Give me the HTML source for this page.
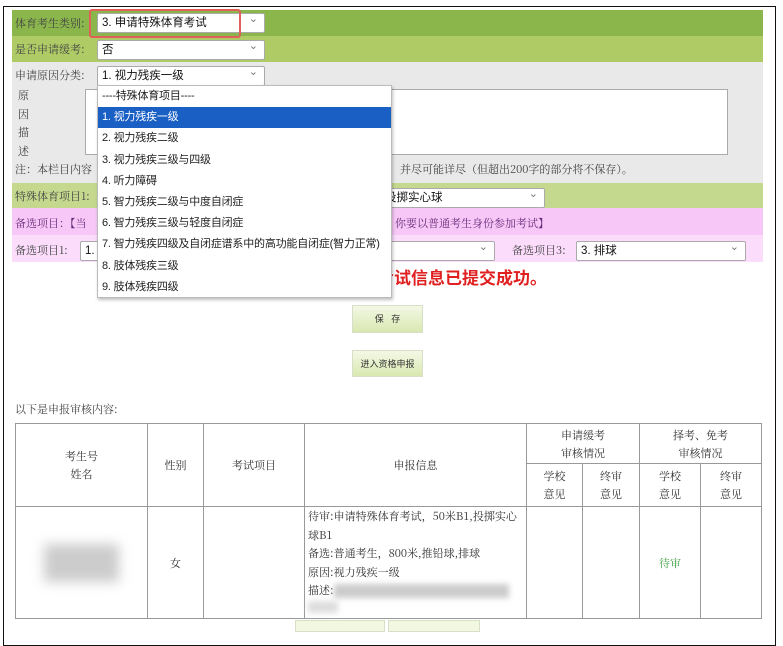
<!DOCTYPE html>
<html><head><meta charset="utf-8"><style>
*{box-sizing:border-box;margin:0;padding:0}
body{width:783px;height:627px;background:#fff;position:relative;overflow:hidden;font-family:"Liberation Sans","Noto Sans CJK SC",sans-serif;font-size:12px;color:#333}
.a{position:absolute}
.frame{left:3px;top:6px;width:773px;height:640px;border:1.5px solid #111}
.sel{position:absolute;background:#fff;border:1px solid #aaa;border-radius:2px;height:20px;font-size:11.5px;line-height:18px;padding-left:4px;color:#111;white-space:nowrap}
.sel:after{content:"⌄";position:absolute;right:6px;top:-4px;font-size:11px;color:#777}
.lbl{position:absolute;font-family:"Noto Serif CJK SC","Liberation Serif",serif;font-size:11px;color:#444;white-space:nowrap}
.dd{left:97px;top:85px;width:295px;height:213px;background:#fff;border:1px solid #bbb;box-shadow:1px 2px 3px rgba(0,0,0,.25);z-index:5}
.dd div{height:21.2px;line-height:21px;padding-left:4px;font-size:11px;color:#222;white-space:nowrap;overflow:hidden;letter-spacing:-0.2px}
.dd .hl{background:#1a5fc4;color:#fff}
.btn{position:absolute;left:352px;width:71px;background:linear-gradient(#f4f8e6,#d9e8b0);border:1px solid #d8dfc8;font-size:9px;text-align:center;color:#333}
table{position:absolute;left:15px;top:423px;border-collapse:collapse;font-family:"Noto Serif CJK SC","Liberation Serif",serif;font-size:11px;color:#333}
td{border:1px solid #999;text-align:center;vertical-align:middle;line-height:18px}
</style></head><body>
<div class="a frame"></div>
<div class="a" style="left:12px;top:10px;width:751px;height:26px;background:#8ab64c"></div>
<div class="a" style="left:12px;top:36px;width:751px;height:26px;background:#aecb66"></div>
<div class="a" style="left:12px;top:62px;width:751px;height:121px;background:#e9e9e9"></div>
<div class="a" style="left:12px;top:183px;width:751px;height:25px;background:#c5d98e"></div>
<div class="a" style="left:12px;top:208px;width:751px;height:27px;background:#f7c8f7"></div>
<div class="a" style="left:12px;top:235px;width:751px;height:27px;background:#fbdcfb"></div>

<div class="lbl" style="left:15px;top:15px">体育考生类别:</div>
<div class="sel" style="left:97px;top:13px;width:168px">3. 申请特殊体育考试</div>
<div class="a" style="left:89px;top:9px;width:152px;height:29px;border:2px solid #e0605a;border-radius:3px"></div>
<div class="lbl" style="left:15px;top:41px">是否申请缓考:</div>
<div class="sel" style="left:97px;top:40px;width:168px">否</div>
<div class="lbl" style="left:15px;top:67px">申请原因分类:</div>
<div class="sel" style="left:97px;top:66px;width:168px">1. 视力残疾一级</div>
<div class="lbl" style="left:18px;top:86px;line-height:18.5px">原<br>因<br>描<br>述</div>
<div class="a" style="left:85px;top:89px;width:643px;height:66px;background:#fff;border:1px solid #aaa"></div>
<div class="lbl" style="left:15px;top:161px">注：本栏目内容</div>
<div class="lbl" style="left:400px;top:161px">并尽可能详尽（但超出200字的部分将不保存）。</div>
<div class="lbl" style="left:15px;top:188px">特殊体育项目1:</div>
<div class="sel" style="left:380px;top:188px;width:165px">投掷实心球</div>
<div class="lbl" style="left:15px;top:215px;color:#6a2a7a">备选项目：【当</div>
<div class="lbl" style="left:395px;top:215px;color:#6a2a7a">你要以普通考生身份参加考试】</div>
<div class="lbl" style="left:15px;top:242px">备选项目1:</div>
<div class="sel" style="left:80px;top:241px;width:415px">1.</div>
<div class="lbl" style="left:512px;top:242px">备选项目3:</div>
<div class="sel" style="left:576px;top:241px;width:170px">3. 排球</div>

<div class="a" style="left:377px;top:264px;font-size:17px;font-weight:bold;color:#e02020;white-space:nowrap">考试信息已提交成功。</div>

<div class="dd a">
<div>----特殊体育项目----</div>
<div class="hl">1. 视力残疾一级</div>
<div>2. 视力残疾二级</div>
<div>3. 视力残疾三级与四级</div>
<div>4. 听力障碍</div>
<div>5. 智力残疾二级与中度自闭症</div>
<div>6. 智力残疾三级与轻度自闭症</div>
<div>7. 智力残疾四级及自闭症谱系中的高功能自闭症(智力正常)</div>
<div>8. 肢体残疾三级</div>
<div>9. 肢体残疾四级</div>
</div>

<div class="btn" style="top:305px;height:28px;line-height:27px">保&nbsp;&nbsp;&nbsp;存</div>
<div class="btn" style="top:350px;height:27px;line-height:26px">进入资格申报</div>

<div class="lbl" style="left:15px;top:401px">以下是申报审核内容:</div>

<table>
<tr style="height:40px">
<td rowspan="2" style="width:132px">考生号<br>姓名</td>
<td rowspan="2" style="width:56px">性别</td>
<td rowspan="2" style="width:101px">考试项目</td>
<td rowspan="2" style="width:222px">申报信息</td>
<td colspan="2">申请缓考<br>审核情况</td>
<td colspan="2">择考、免考<br>审核情况</td>
</tr>
<tr style="height:43px">
<td style="width:56px">学校<br>意见</td><td style="width:57px">终审<br>意见</td>
<td style="width:61px">学校<br>意见</td><td style="width:61px">终审<br>意见</td>
</tr>
<tr style="height:111px">
<td><div style="width:75px;height:38px;margin:0 auto;background:#ccc;filter:blur(6px)"></div></td>
<td>女</td><td></td>
<td style="text-align:left;padding-left:3px;line-height:18.5px">待审:申请特殊体育考试，50米B1,投掷实心球B1<br>备选:普通考生，800米,推铅球,排球<br>原因:视力残疾一级<br>描述:<span style="display:inline-block;width:175px;height:14px;background:#ccc;filter:blur(3px);vertical-align:middle"></span><br><span style="display:inline-block;width:30px;height:12px;background:#ddd;filter:blur(3px)"></span></td>
<td></td><td></td><td style="color:#3a9a3a">待审</td><td></td>
</tr>
</table>
<div class="a" style="left:295px;top:620px;width:90px;height:12px;border:1px solid #d8dfc8;background:#f2f7e2"></div>
<div class="a" style="left:388px;top:620px;width:92px;height:12px;border:1px solid #d8dfc8;background:#f2f7e2"></div>
</body></html>
